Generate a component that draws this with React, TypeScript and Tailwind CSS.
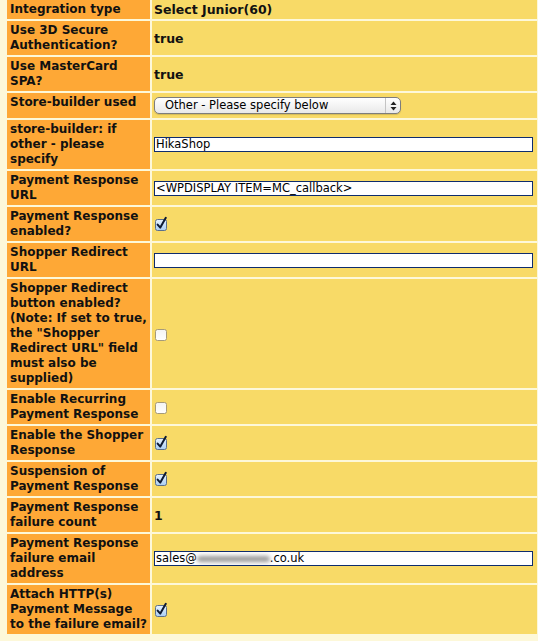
import React from 'react';

type Value =
  | { kind: 'text'; text: string }
  | { kind: 'check'; checked: boolean }
  | { kind: 'input'; value: string }
  | { kind: 'email' }
  | { kind: 'select'; value: string };

interface Row {
  label: string[];
  value: Value;
}

const rows: Row[] = [
  { label: ['Integration type'], value: { kind: 'text', text: 'Select Junior(60)' } },
  { label: ['Use 3D Secure', 'Authentication?'], value: { kind: 'text', text: 'true' } },
  { label: ['Use MasterCard', 'SPA?'], value: { kind: 'text', text: 'true' } },
  { label: ['Store-builder used'], value: { kind: 'select', value: 'Other - Please specify below' } },
  { label: ['store-builder: if', 'other - please', 'specify'], value: { kind: 'input', value: 'HikaShop' } },
  { label: ['Payment Response', 'URL'], value: { kind: 'input', value: '<WPDISPLAY ITEM=MC_callback>' } },
  { label: ['Payment Response', 'enabled?'], value: { kind: 'check', checked: true } },
  { label: ['Shopper Redirect', 'URL'], value: { kind: 'input', value: '' } },
  {
    label: [
      'Shopper Redirect',
      'button enabled?',
      '(Note: If set to true,',
      'the "Shopper',
      'Redirect URL" field',
      'must also be',
      'supplied)',
    ],
    value: { kind: 'check', checked: false },
  },
  { label: ['Enable Recurring', 'Payment Response'], value: { kind: 'check', checked: false } },
  { label: ['Enable the Shopper', 'Response'], value: { kind: 'check', checked: true } },
  { label: ['Suspension of', 'Payment Response'], value: { kind: 'check', checked: true } },
  { label: ['Payment Response', 'failure count'], value: { kind: 'text', text: '1' } },
  { label: ['Payment Response', 'failure email', 'address'], value: { kind: 'email' } },
  { label: ['Attach HTTP(s)', 'Payment Message', 'to the failure email?'], value: { kind: 'check', checked: true } },
];

function Checkbox({ checked }: { checked: boolean }) {
  return (
    <svg width="16" height="16" viewBox="0 0 16 16" className="block">
      <defs>
        <linearGradient id={checked ? 'cbOn' : 'cbOff'} x1="0" y1="0" x2="0" y2="1">
          {checked ? (
            <>
              <stop offset="0" stopColor="#e8f3ff" />
              <stop offset="1" stopColor="#a9cdf3" />
            </>
          ) : (
            <>
              <stop offset="0" stopColor="#f4f4f4" />
              <stop offset="1" stopColor="#ffffff" />
            </>
          )}
        </linearGradient>
      </defs>
      <rect
        x="1.5"
        y="3.5"
        width="11"
        height="11"
        rx="2"
        fill={checked ? 'url(#cbOn)' : 'url(#cbOff)'}
        stroke={checked ? '#5a6f8c' : '#a59a7a'}
        strokeWidth="1"
      />
      {checked && (
        <path
          d="M3.6 8.6 L6.3 11.6 L11.8 1.8"
          fill="none"
          stroke="#0d1a33"
          strokeWidth="2"
          strokeLinecap="round"
          strokeLinejoin="round"
        />
      )}
    </svg>
  );
}

function TextBox({ children }: { children?: React.ReactNode }) {
  return (
    <div className="h-[15px] w-[379px] border border-[#0e2c6e] bg-white pl-px text-[11.5px] leading-[13px] text-black font-['DejaVu_Sans',sans-serif] whitespace-nowrap overflow-hidden">
      {children}
    </div>
  );
}

function SelectBox({ value }: { value: string }) {
  return (
    <div className="my-[2px] flex h-[17px] w-[247px] items-center rounded-[5px] border border-[#7d7d7d] bg-gradient-to-b from-white to-[#e9e9e9] shadow-[0_1px_1px_rgba(0,0,0,0.15)]">
      <span className="flex-1 pl-[10px] text-[11.5px] leading-[15px] text-black font-['DejaVu_Sans',sans-serif] whitespace-nowrap">
        {value}
      </span>
      <span className="flex h-full w-[15px] items-center justify-center border-l border-[#c4c4c4]">
        <svg width="7" height="10" viewBox="0 0 7 10">
          <path d="M3.5 0.5 L6.5 4 L0.5 4 Z" fill="#222" />
          <path d="M3.5 9.5 L6.5 6 L0.5 6 Z" fill="#222" />
        </svg>
      </span>
    </div>
  );
}

function ValueCell({ value }: { value: Value }) {
  switch (value.kind) {
    case 'text':
      return <span className="font-bold">{value.text}</span>;
    case 'check':
      return <Checkbox checked={value.checked} />;
    case 'input':
      return <TextBox>{value.value}</TextBox>;
    case 'select':
      return <SelectBox value={value.value} />;
    case 'email':
      return (
        <TextBox>
          sales@
          <span className="relative inline-block h-[10px] w-[73px] align-middle">
            <span className="absolute inset-x-0 top-[2px] h-[6px] rounded-full bg-[#9a9a9a] blur-[2px]" />
          </span>
          .co.uk
        </TextBox>
      );
  }
}

export default function App() {
  return (
    <div className="min-h-[641px] w-[538px] bg-[#fdf8d9] font-['DejaVu_Sans',sans-serif] text-[12px] leading-[15px] text-[#111]">
      <div className="ml-[7px] grid w-[530px] grid-cols-[143px_385px] gap-[2px] pb-[6px]">
        {rows.map((row, i) => (
          <React.Fragment key={i}>
            <div className="bg-[#fea836] px-[3px] py-[2px] font-bold whitespace-nowrap">
              {row.label.map((line, j) => (
                <div key={j}>{line}</div>
              ))}
            </div>
            <div className="flex items-center bg-[#f8da67] px-[2px] py-[2px] text-[12.5px]">
              <ValueCell value={row.value} />
            </div>
          </React.Fragment>
        ))}
      </div>
    </div>
  );
}
